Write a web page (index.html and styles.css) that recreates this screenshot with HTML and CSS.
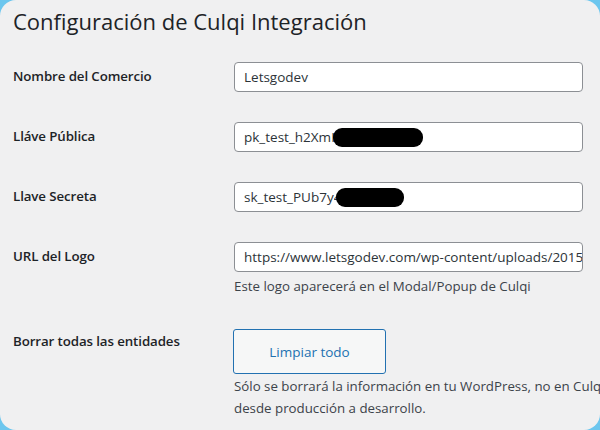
FILE: index.html
```html
<!DOCTYPE html>
<html lang="es">
<head>
<meta charset="utf-8">
<title>Configuración de Culqi Integración</title>
<link rel="stylesheet" href="styles.css">
</head>
<body>
<div class="panel">
  <h1 class="title">Configuración de Culqi Integración</h1>
  <div class="form">
    <div class="row">
      <div class="label">Nombre del Comercio</div>
      <div class="field">
        <div class="input">Letsgodev</div>
      </div>
    </div>
    <div class="row">
      <div class="label">Lláve Pública</div>
      <div class="field">
        <div class="input">pk_test_h2Xm<span class="cut">I</span><span class="redact redact-pk"></span></div>
      </div>
    </div>
    <div class="row">
      <div class="label">Llave Secreta</div>
      <div class="field">
        <div class="input">sk_test_PUb7y<span class="cut">4</span><span class="redact redact-sk"></span></div>
      </div>
    </div>
    <div class="row">
      <div class="label">URL del Logo</div>
      <div class="field">
        <div class="input">https://www.letsgodev.com/wp-content/uploads/2015/05/logo.png</div>
        <p class="desc">Este logo aparecerá en el Modal/Popup de Culqi</p>
      </div>
    </div>
    <div class="row row-last">
      <div class="label">Borrar todas las entidades</div>
      <div class="field">
        <button class="button" type="button">Limpiar todo</button>
        <p class="desc wide">Sólo se borrará la información en tu WordPress, no en Culqi<br>desde producción a desarrollo.</p>
      </div>
    </div>
  </div>
</div>
</body>
</html>
```
FILE: styles.css
```css
html, body {
  margin: 0;
  padding: 0;
  width: 600px;
  height: 430px;
  overflow: hidden;
  background: #6cc6ee;
}
body {
  font-family: "Open Sans", "Noto Sans", sans-serif;
  color: #1d2327;
}
.panel {
  width: 600px;
  height: 430px;
  box-sizing: border-box;
  background: #f0f0f1;
  border-radius: 16px;
  padding: 0 0 0 13px;
  overflow: hidden;
}
.title {
  margin: 0;
  padding-top: 7px;
  font-size: 22px;
  font-weight: 400;
  line-height: 29px;
  letter-spacing: 0;
  color: #1d2327;
}
.form {
  display: flex;
  flex-direction: column;
  padding-top: 26px;
}
.row {
  display: flex;
  align-items: flex-start;
}
.label {
  width: 221px;
  flex: none;
  font-size: 13.3px;
  font-weight: 600;
  line-height: 20px;
  padding-top: 4px;
  letter-spacing: -0.1px;
}
.field {
  flex: none;
  width: 349px;
  padding-bottom: 30px;
}
.input {
  box-sizing: border-box;
  height: 30px;
  width: 349px;
  border: 1px solid #8c8f94;
  border-radius: 4px;
  background: #fff;
  padding: 0 9px;
  font-size: 13.5px;
  line-height: 28px;
  color: #2c3338;
  white-space: nowrap;
  overflow: hidden;
  display: flex;
  align-items: center;
}
.cut {
  display: inline-block;
  width: 3px;
  overflow: hidden;
}
.redact {
  display: inline-block;
  height: 19px;
  background: #000;
  border-radius: 9px;
  margin-left: -1px;
}
.redact-pk { width: 90px; }
.redact-sk { width: 68px; }
.desc {
  margin: 4px 0 0;
  font-size: 13.3px;
  line-height: 20px;
  color: #3c434a;
}
.row-last .field { padding-top: 3px; }
.row-last .label { padding-top: 5px; }
.button {
  box-sizing: border-box;
  width: 153px;
  height: 45px;
  margin-left: -1px;
  border: 1px solid #2271b1;
  border-radius: 3px;
  background: #f6f7f7;
  color: #2271b1;
  font-family: "Open Sans", "Noto Sans", sans-serif;
  font-size: 13.5px;
  cursor: pointer;
}
.desc.wide {
  width: 380px;
  white-space: nowrap;
  line-height: 22px;
  margin-top: 1px;
}
```
